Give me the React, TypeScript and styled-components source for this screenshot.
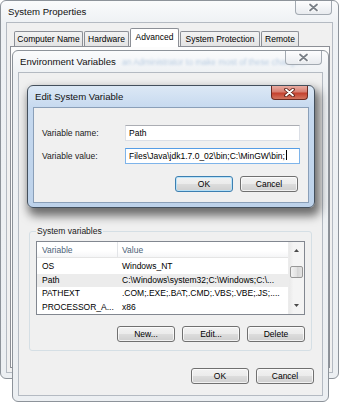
import React from "react";
import styled, { createGlobalStyle, css } from "styled-components";

const GlobalStyle = createGlobalStyle`
	body {
		margin: 0;
		background: #ffffff;
		font-family: "Liberation Sans", Arial, sans-serif;
	}
`;

const Desktop = styled.div`
	position: relative;
	width: 343px;
	height: 402px;
	overflow: hidden;
	background: #ffffff;
`;

interface FrameProps {
	$active?: boolean;
}

const Frame = styled.div<FrameProps>`
	position: absolute;
	box-sizing: border-box;
	display: flex;
	flex-direction: column;
	padding: 0 5px 5px;
	border-radius: 6px;
	${({ $active }) =>
		$active
			? css`
					border: 1px solid #44505d;
					background: linear-gradient(#dce8f5, #c6d9ef 22px, #bdd2ea);
					box-shadow: 3px 6px 10px 2px rgba(0, 0, 0, 0.55);
			  `
			: css`
					border: 1px solid #8d939a;
					background: linear-gradient(#fafbfc, #eef1f4 22px, #eceff2);
			  `};
`;

const SysPropWindow = styled(Frame)`
	left: 0;
	top: 0;
	width: 339px;
	height: 379px;
`;

const EnvWindow = styled(Frame)`
	left: 12px;
	top: 50px;
	width: 317px;
	height: 352px;
`;

const EditDialog = styled(Frame)`
	left: 27px;
	top: 85px;
	width: 288px;
	height: 123px;
	padding-bottom: 4px;
`;

const TitleBar = styled.div`
	display: flex;
	align-items: flex-start;
	height: 21px;
	position: relative;
`;

const Title = styled.span`
	padding-left: 2px;
	line-height: 21px;
	font-size: 9.6px;
	color: #111;
	white-space: nowrap;
`;

const GlassText = styled.span`
	position: absolute;
	left: 104px;
	top: 6px;
	white-space: nowrap;
	font-size: 8.5px;
	color: #7fa4cc;
	opacity: 0.5;
	filter: blur(0.9px);
`;

const CloseButton = styled.div<FrameProps>`
	margin-left: auto;
	margin-right: 1px;
	width: 37px;
	height: 14px;
	box-sizing: border-box;
	display: flex;
	align-items: center;
	justify-content: center;
	border-radius: 0 0 4px 4px;
	position: relative;
	${({ $active }) =>
		$active
			? css`
					border: 1px solid #6b2a22;
					border-top: none;
					background: linear-gradient(#e9aca2, #d77e71 45%, #c4412f 55%, #d3745f);
			  `
			: css`
					border: 1px solid #a2a9b1;
					border-top: none;
					background: linear-gradient(#fdfdfe, #e8ebef);
			  `};
`;

const CloseGlyph: React.FC<FrameProps> = ({ $active }) => (
	<svg width="11" height="9" viewBox="0 0 11 9">
		<path
			d="M2 1.5 L9 7.5 M9 1.5 L2 7.5"
			stroke={$active ? "#5a1a12" : "#ffffff"}
			strokeWidth="3.6"
			strokeLinecap="round"
			fill="none"
		/>
		<path
			d="M2 1.5 L9 7.5 M9 1.5 L2 7.5"
			stroke={$active ? "#ffffff" : "#7b8188"}
			strokeWidth="1.8"
			strokeLinecap="round"
			fill="none"
		/>
	</svg>
);

const Client = styled.div<FrameProps>`
	flex: 1;
	display: flex;
	flex-direction: column;
	background: #f0f0f0;
	border: 1px solid ${({ $active }) => ($active ? "#8a9fb8" : "#b4bac2")};
	font-size: 8.5px;
	color: #000;
	min-height: 0;
`;

/* --- System Properties tabs --- */

const TabStrip = styled.div`
	display: flex;
	align-items: flex-end;
	height: 18px;
	margin: 5px 0 0 7px;
	gap: 1px;
`;

const Tab = styled.div<{ $selected?: boolean; $w: number }>`
	box-sizing: border-box;
	width: ${({ $w }) => $w}px;
	height: ${({ $selected }) => ($selected ? 19 : 15)}px;
	padding-top: ${({ $selected }) => ($selected ? 3 : 1.5)}px;
	text-align: center;
	white-space: nowrap;
	border: 1px solid #8c8f96;
	border-bottom: none;
	border-radius: 2px 2px 0 0;
	background: ${({ $selected }) =>
		$selected ? "#ffffff" : "linear-gradient(#f3f3f3, #e3e3e3)"};
	margin-bottom: ${({ $selected }) => ($selected ? -1 : 0)}px;
	position: relative;
	z-index: ${({ $selected }) => ($selected ? 1 : 0)};
`;

const TabPanel = styled.div`
	flex: 1;
	margin: 0 2px 4px 3px;
	border: 1px solid #8c8f96;
	background: #fcfcfc;
`;

/* --- Group box & list view --- */

const GroupBox = styled.fieldset`
	margin: 153px 10px 0 10px;
	padding: 4px 6px 8px;
	border: 1px solid #d5dfe5;
	border-radius: 3px;
	display: flex;
	flex-direction: column;
	min-width: 0;
`;

const Legend = styled.legend`
	padding: 0 1px;
	margin-left: 0;
	font-size: 8.5px;
	color: #1a1a1a;
	line-height: 11px;
`;

const ListView = styled.div`
	display: flex;
	height: 74px;
	box-sizing: border-box;
	border: 1px solid #828790;
	background: #ffffff;
`;

const ListBody = styled.div`
	flex: 1;
	display: flex;
	flex-direction: column;
	min-width: 0;
`;

const HeaderRow = styled.div`
	display: flex;
	height: 19px;
	box-sizing: border-box;
	border-bottom: 1px solid #e5e5e5;
	background: linear-gradient(#ffffff, #ffffff 60%, #f5f6f7);
	color: #4c5f78;
	margin-bottom: 2px;
`;

const Row = styled.div<{ $selected?: boolean }>`
	display: flex;
	height: 13.5px;
	line-height: 13.5px;
	background: ${({ $selected }) => ($selected ? "#ececec" : "transparent")};
`;

const Cell = styled.div<{ $first?: boolean }>`
	box-sizing: border-box;
	white-space: nowrap;
	overflow: hidden;
	${({ $first }) =>
		$first
			? css`
					width: 81px;
					padding-left: 5px;
			  `
			: css`
					flex: 1;
					padding-left: 4px;
			  `};
`;

const HeaderCell = styled(Cell)`
	display: flex;
	align-items: center;
	${({ $first }) => $first && "border-right: 1px solid #e3e5e8;"}
`;

const ScrollBar = styled.div`
	width: 15px;
	display: flex;
	flex-direction: column;
	background: linear-gradient(90deg, #e9e9e9, #f4f4f4 30%, #f4f4f4);
	border-left: 1px solid #ececec;
`;

const ScrollArrow = styled.div`
	height: 17px;
	display: flex;
	align-items: center;
	justify-content: center;
`;

const Thumb = styled.div`
	margin: 7px 1px 0;
	height: 12px;
	box-sizing: border-box;
	border: 1px solid #979797;
	border-radius: 2px;
	background: linear-gradient(90deg, #f3f3f3, #e2e2e2 50%, #d4d4d4 51%, #e3e3e3);
`;

const Track = styled.div`
	flex: 1;
`;

const Arrow: React.FC<{ up?: boolean }> = ({ up }) => (
	<svg width="5" height="3" viewBox="0 0 5 3">
		<path d={up ? "M0 3 L2.5 0 L5 3 Z" : "M0 0 L2.5 3 L5 0 Z"} fill="#4a4a4a" />
	</svg>
);

/* --- Buttons and fields --- */

const ButtonRow = styled.div<{ $top: number; $right: number }>`
	display: flex;
	justify-content: flex-end;
	gap: 7px;
	margin-top: ${({ $top }) => $top}px;
	margin-right: ${({ $right }) => $right}px;
`;

const Button = styled.button<{ $focus?: boolean }>`
	width: 58px;
	height: 16px;
	padding: 0;
	font-family: inherit;
	font-size: 8.5px;
	color: #000;
	border-radius: 3px;
	border: 1px solid ${({ $focus }) => ($focus ? "#3c7fb1" : "#707070")};
	background: linear-gradient(#f2f2f2, #ebebeb 50%, #dddddd 50%, #cfcfcf);
	box-shadow: inset 0 0 0 1px
		${({ $focus }) => ($focus ? "rgba(180, 225, 250, 0.9)" : "rgba(255, 255, 255, 0.7)")};
`;

const FieldRow = styled.div<{ $top: number }>`
	display: flex;
	align-items: center;
	margin: ${({ $top }) => $top}px 8px 0 8px;
`;

const Label = styled.span`
	width: 83px;
	color: #1a1a1a;
`;

const TextBox = styled.div<{ $focus?: boolean }>`
	flex: 1;
	height: 16px;
	box-sizing: border-box;
	padding: 0 3px;
	line-height: 14px;
	white-space: nowrap;
	overflow: hidden;
	background: #ffffff;
	border: 1px solid ${({ $focus }) => ($focus ? "#7eb4ea" : "#dbdfe6")};
	border-top-color: ${({ $focus }) => ($focus ? "#569de5" : "#abadb3")};
`;

const Caret = styled.span`
	display: inline-block;
	width: 1px;
	height: 10px;
	margin-left: 1px;
	vertical-align: -1px;
	background: #000;
`;

const systemVars = [
	{ name: "OS", value: "Windows_NT" },
	{ name: "Path", value: "C:\\Windows\\system32;C:\\Windows;C:\\...", selected: true },
	{ name: "PATHEXT", value: ".COM;.EXE;.BAT;.CMD;.VBS;.VBE;.JS;...." },
	{ name: "PROCESSOR_A...", value: "x86" },
];

const App: React.FC = () => (
	<Desktop>
		<GlobalStyle />

		<SysPropWindow>
			<TitleBar>
				<Title>System Properties</Title>
				<CloseButton>
					<CloseGlyph />
				</CloseButton>
			</TitleBar>
			<Client>
				<TabStrip>
					<Tab $w={69}>Computer Name</Tab>
					<Tab $w={45}>Hardware</Tab>
					<Tab $w={49} $selected>
						Advanced
					</Tab>
					<Tab $w={80}>System Protection</Tab>
					<Tab $w={38}>Remote</Tab>
				</TabStrip>
				<TabPanel />
			</Client>
		</SysPropWindow>

		<EnvWindow>
			<TitleBar>
				<Title>Environment Variables</Title>
				<GlassText>an Administrator to make most of these changes.</GlassText>
				<CloseButton>
					<CloseGlyph />
				</CloseButton>
			</TitleBar>
			<Client>
				<GroupBox>
					<Legend>System variables</Legend>
					<ListView>
						<ListBody>
							<HeaderRow>
								<HeaderCell $first>Variable</HeaderCell>
								<HeaderCell>Value</HeaderCell>
							</HeaderRow>
							{systemVars.map((v) => (
								<Row key={v.name} $selected={v.selected}>
									<Cell $first>{v.name}</Cell>
									<Cell>{v.value}</Cell>
								</Row>
							))}
						</ListBody>
						<ScrollBar>
							<ScrollArrow>
								<Arrow up />
							</ScrollArrow>
							<Thumb />
							<Track />
							<ScrollArrow>
								<Arrow />
							</ScrollArrow>
						</ScrollBar>
					</ListView>
					<ButtonRow $top={11} $right={0}>
						<Button>New...</Button>
						<Button>Edit...</Button>
						<Button>Delete</Button>
					</ButtonRow>
				</GroupBox>
				<ButtonRow $top={17} $right={8}>
					<Button>OK</Button>
					<Button>Cancel</Button>
				</ButtonRow>
			</Client>
		</EnvWindow>

		<EditDialog $active>
			<TitleBar>
				<Title>Edit System Variable</Title>
				<CloseButton $active>
					<CloseGlyph $active />
				</CloseButton>
			</TitleBar>
			<Client $active>
				<FieldRow $top={17}>
					<Label>Variable name:</Label>
					<TextBox>Path</TextBox>
				</FieldRow>
				<FieldRow $top={7}>
					<Label>Variable value:</Label>
					<TextBox $focus>
						Files\Java\jdk1.7.0_02\bin;C:\MinGW\bin;
						<Caret />
					</TextBox>
				</FieldRow>
				<ButtonRow $top={12} $right={10}>
					<Button $focus>OK</Button>
					<Button>Cancel</Button>
				</ButtonRow>
			</Client>
		</EditDialog>
	</Desktop>
);

export default App;
